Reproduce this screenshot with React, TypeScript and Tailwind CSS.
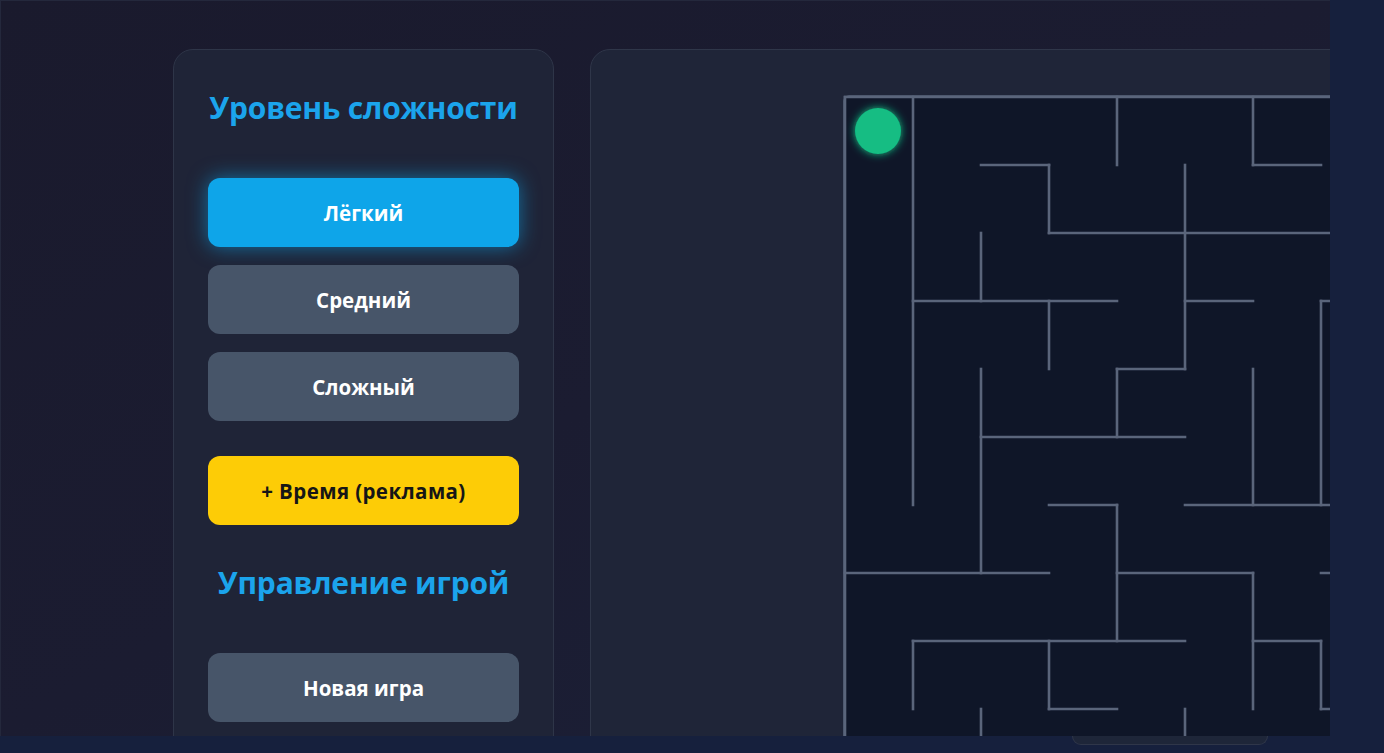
import React from "react";

const H: [number, number, number][] = [
  [0, 0, 10],
  [1, 2, 3], [1, 6, 7],
  [2, 3, 10],
  [3, 1, 4], [3, 5, 6], [3, 7, 8],
  [4, 4, 5],
  [5, 2, 5],
  [6, 3, 4], [6, 5, 8],
  [7, 0, 3], [7, 4, 6], [7, 7, 8],
  [8, 1, 5], [8, 6, 7],
  [9, 3, 4], [9, 7, 8],
];
const V: [number, number, number][] = [
  [0, 0, 11],
  [1, 0, 6], [1, 8, 9],
  [2, 2, 3], [2, 4, 7], [2, 9, 11],
  [3, 1, 2], [3, 3, 4], [3, 8, 9],
  [4, 0, 1], [4, 4, 5], [4, 6, 8],
  [5, 1, 4], [5, 9, 11],
  [6, 0, 1], [6, 4, 6], [6, 7, 9],
  [7, 3, 6], [7, 8, 9],
];
const C = 68;

function Maze() {
  return (
    <div className="w-[700px] h-[700px] shrink-0 rounded-[6px] border-2 border-[#4a556a] bg-[#0f1628]">
      <svg width="700" height="700" className="overflow-visible -mt-[2px] -ml-[2px]">
        <defs>
          <filter id="glow" x="-50%" y="-50%" width="200%" height="200%">
            <feGaussianBlur stdDeviation="4" result="b" />
            <feMerge>
              <feMergeNode in="b" />
              <feMergeNode in="SourceGraphic" />
            </feMerge>
          </filter>
        </defs>
        <g stroke="#5a657b" strokeWidth="2.6" strokeLinecap="square">
          {H.map(([j, a, b], k) => (
            <line key={"h" + k} x1={a * C + 2} y1={j * C + 2} x2={b * C + 2} y2={j * C + 2} />
          ))}
          {V.map(([i, a, b], k) => (
            <line key={"v" + k} x1={i * C + 2} y1={a * C + 2} x2={i * C + 2} y2={b * C + 2} />
          ))}
        </g>
        <circle cx={35} cy={36} r={23} fill="#12bd83" filter="url(#glow)" />
      </svg>
    </div>
  );
}

const font = { fontFamily: '"Open Sans", "Noto Sans", sans-serif' };

function Btn({ children, cls }: { children: React.ReactNode; cls: string }) {
  return (
    <div className={"h-[69px] w-full rounded-[12px] flex items-center justify-center pt-[2px] text-[20.5px] font-bold " + cls}>
      {children}
    </div>
  );
}

export default function App() {
  return (
    <div className="w-[1384px] h-[753px] bg-[#16203d] overflow-hidden flex flex-col" style={font}>
      <div className="w-[1330px] h-[736px] shrink-0 overflow-hidden bg-gradient-to-br from-[#1a1a2d] via-[#1b1c31] to-[#1b2038] border-l border-t border-[#24283c] flex pl-[172px] pt-[48px] gap-[36px]">
        <div className="w-[381px] h-[760px] shrink-0 rounded-[20px] bg-[#1f2437] border border-[#2e3548] px-[34px] pt-[37px] flex flex-col items-center">
          <div className="h-[40px] flex items-center text-[30px] font-bold text-[#1ba4ec] tracking-[-0.2px]">Уровень сложности</div>
          <div className="mt-[51px] w-full flex flex-col gap-[18px]">
            <Btn cls="bg-[#0ea5e9] text-white shadow-[0_0_20px_rgba(14,165,233,0.6)]">Лёгкий</Btn>
            <Btn cls="bg-[#475569] text-white">Средний</Btn>
            <Btn cls="bg-[#475569] text-white">Сложный</Btn>
          </div>
          <div className="mt-[35px] w-full">
            <Btn cls="bg-[#fdcc06] text-[#161616] tracking-[0.4px]">+ Время (реклама)</Btn>
          </div>
          <div className="mt-[37px] h-[40px] flex items-center text-[30px] font-bold text-[#1ba4ec] tracking-[-0.2px]">Управление игрой</div>
          <div className="mt-[51px] w-full">
            <Btn cls="bg-[#475569] text-white">Новая игра</Btn>
          </div>
        </div>
        <div className="w-[1000px] h-[760px] shrink-0 rounded-[20px] bg-[#1f2538] border border-[#2f3649] pl-[252px] pt-[45px]">
          <Maze />
        </div>
      </div>
      <div className="ml-[1072px] w-[196px] h-[9px] rounded-b-[14px] bg-[#1e2639] border border-t-0 border-[#2f3649]" />
    </div>
  );
}
